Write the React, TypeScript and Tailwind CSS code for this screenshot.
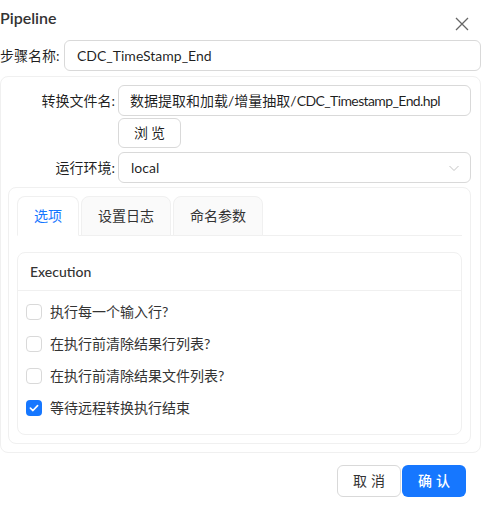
import React, { useState } from 'react';

const font = "font-['Lato','Noto_Sans_CJK_SC',sans-serif]";

const Checkbox: React.FC<{ checked: boolean; label: string; onChange: () => void }> = ({ checked, label, onChange }) => (
  <label className="flex h-8 items-center gap-[8px] pl-[8px] cursor-pointer" onClick={onChange}>
    {checked ? (
      <span className="flex h-4 w-4 items-center justify-center rounded-[4px] bg-[#1677ff]">
        <svg viewBox="0 0 16 16" className="h-3 w-3">
          <path d="M3.2 8.2 L6.6 11.4 L12.8 4.8" fill="none" stroke="#fff" strokeWidth="2.2" strokeLinecap="round" strokeLinejoin="round" />
        </svg>
      </span>
    ) : (
      <span className="h-4 w-4 rounded-[4px] border border-[#d9d9d9] bg-white" />
    )}
    <span className="text-sm leading-[22px] text-[#333]">{label}</span>
  </label>
);

export default function App() {
  const [tab, setTab] = useState(0);
  const [opts, setOpts] = useState([false, false, false, true]);
  const labels = ['执行每一个输入行?', '在执行前清除结果行列表?', '在执行前清除结果文件列表?', '等待远程转换执行结束'];
  const tabs = ['选项', '设置日志', '命名参数'];

  return (
    <div className={`${font} h-[515px] w-[484px] bg-white text-[rgba(0,0,0,0.88)] pr-[3px]`}>
      {/* header */}
      <div className="flex items-start justify-between pt-[7px]">
        <div className="text-[16px] font-semibold leading-[22px] text-[#333]">Pipeline</div>
        <svg viewBox="0 0 14 14" className="mt-[10px] mr-[12px] h-[14px] w-[14px]">
          <path d="M1 1 L13 13 M13 1 L1 13" stroke="#666" strokeWidth="1.3" fill="none" />
        </svg>
      </div>

      {/* step name */}
      <div className="mt-[9px] flex items-center">
        <div className="w-16 shrink-0 text-sm leading-[22px] whitespace-nowrap">步骤名称:</div>
        <div className="flex h-[31px] flex-1 items-center rounded-md border border-[#d9d9d9] px-[12px] text-sm">CDC_TimeStamp_End</div>
      </div>

      {/* settings box */}
      <div className="mt-[5px] rounded-lg border border-[#f0f0f0] pt-[8px] pr-[9px] pb-[8px] pl-[7px]">
        <div className="flex items-center">
          <div className="w-[110px] shrink-0 pr-[3px] text-right text-sm leading-[22px]">转换文件名:</div>
          <div className="flex h-[31px] flex-1 items-center rounded-md border border-[#d9d9d9] px-[11px] text-sm whitespace-nowrap overflow-hidden">
            数据提取和加载/增量抽取/<span className="tracking-[-0.6px]">CDC_Timestamp_End.hpl</span>
          </div>
        </div>
        <div className="mt-[2px] pl-[110px]">
          <button className="h-[30px] w-[63px] rounded-md border border-[#d9d9d9] bg-white text-sm tracking-[3px] pl-[3px]">浏览</button>
        </div>
        <div className="mt-[4px] flex items-center">
          <div className="w-[110px] shrink-0 pr-[3px] text-right text-sm leading-[22px]">运行环境:</div>
          <div className="flex h-[31px] flex-1 items-center justify-between rounded-md border border-[#d9d9d9] pl-[12px] pr-[10px] text-sm">
            <span>local</span>
            <svg viewBox="0 0 12 12" className="h-3 w-3">
              <path d="M1.5 4 L6 8.5 L10.5 4" fill="none" stroke="#c4c4c4" strokeWidth="1" />
            </svg>
          </div>
        </div>

        {/* tabs box */}
        <div className="mt-[4px] rounded-lg border border-[#f0f0f0] p-[8px]">
          <div className="flex gap-[2px] border-b border-[#f0f0f0]">
            {tabs.map((t, i) => (
              <button
                key={t}
                onClick={() => setTab(i)}
                className={`-mb-px h-[40px] rounded-t-lg border border-[#f0f0f0] text-sm ${i === 0 ? 'w-[62px]' : 'w-[90px]'} ${
                  tab === i ? 'border-b-white bg-white text-[#1677ff]' : 'bg-[#fafafa] text-[#333]'
                }`}
              >
                {t}
              </button>
            ))}
          </div>

          <div className="mt-[16px] rounded-lg border border-[#f0f0f0]">
            <div className="flex h-[38px] items-center border-b border-[#f0f0f0] px-[12px] text-sm font-medium text-[#333]">Execution</div>
            <div className="pt-[5px] pb-[10px]">
              {labels.map((l, i) => (
                <Checkbox
                  key={l}
                  label={l}
                  checked={opts[i]}
                  onChange={() => setOpts(opts.map((v, j) => (j === i ? !v : v)))}
                />
              ))}
            </div>
          </div>
        </div>
      </div>

      {/* footer */}
      <div className="mt-[12px] flex justify-end gap-[1px] pr-[15px]">
        <button className="h-[32px] w-[64px] rounded-md border border-[#d9d9d9] bg-white text-sm tracking-[4px] pl-[4px] text-[#333]">取消</button>
        <button className="h-[32px] w-[64px] rounded-md bg-[#1677ff] text-sm font-medium tracking-[4px] pl-[4px] text-white">确认</button>
      </div>
    </div>
  );
}
